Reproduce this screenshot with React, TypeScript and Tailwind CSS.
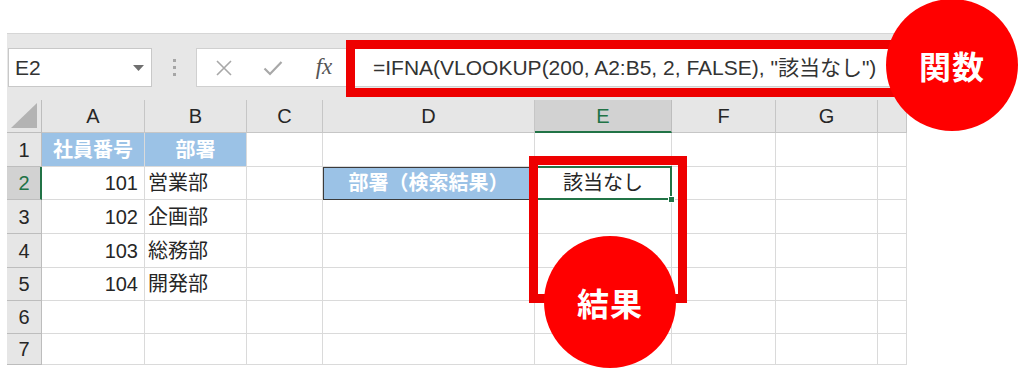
import React from "react";

const font = { fontFamily: '"Liberation Sans", "Noto Sans CJK JP", sans-serif' };

const cols = ["A", "B", "C", "D", "E", "F", "G", ""];
const rowHeights = ["h-[34px]", "h-[33px]", "h-[34px]", "h-[34px]", "h-[33px]", "h-[33px]", "h-[31px]"];

type CellDef = { text?: string; cls?: string };

function cellFor(r: number, c: number): CellDef {
  const data: Record<string, CellDef> = {
    "1-0": { text: "社員番号", cls: "bg-[#9bc2e6] text-white font-bold justify-center" },
    "1-1": { text: "部署", cls: "bg-[#9bc2e6] text-white font-bold justify-center" },
    "2-0": { text: "101", cls: "justify-end pr-[6px]" },
    "2-1": { text: "営業部", cls: "justify-start pl-[3px]" },
    "3-0": { text: "102", cls: "justify-end pr-[6px]" },
    "3-1": { text: "企画部", cls: "justify-start pl-[3px]" },
    "4-0": { text: "103", cls: "justify-end pr-[6px]" },
    "4-1": { text: "総務部", cls: "justify-start pl-[3px]" },
    "5-0": { text: "104", cls: "justify-end pr-[6px]" },
    "5-1": { text: "開発部", cls: "justify-start pl-[3px]" },
    "2-3": { text: "部署（検索結果）", cls: "bg-[#9bc2e6] text-white font-bold justify-center outline outline-1 outline-[#3b3b3b] -outline-offset-1" },
    "2-4": { text: "該当なし", cls: "justify-center relative" },
  };
  return data[`${r}-${c}`] ?? {};
}

export default function App() {
  return (
    <div className="w-[1024px] h-[374px] bg-white relative overflow-hidden text-[#262626]" style={font}>
      <div className="pt-[33px] pl-[7px]">
        <div className="w-[900px]">
          {/* toolbar */}
          <div className="h-[67px] bg-[#e7e7e7] border-t border-[#d6d6d6] flex items-start pt-[14px] pl-[1px]">
            <div className="w-[144px] h-[39px] bg-white border border-[#c8c8c8] flex items-center pl-[6px] pr-[7px]">
              <span className="text-[21px] text-[#333] flex-1">E2</span>
              <svg width="11" height="6" viewBox="0 0 11 6"><path d="M0 0 L11 0 L5.5 6 Z" fill="#6f6f6f" /></svg>
            </div>
            <div className="w-[44px] h-[39px] flex flex-col items-center justify-center gap-[4px]">
              <div className="w-[3px] h-[3px] bg-[#a6a6a6]" />
              <div className="w-[3px] h-[3px] bg-[#a6a6a6]" />
              <div className="w-[3px] h-[3px] bg-[#a6a6a6]" />
            </div>
            <div className="flex-1 h-[39px] bg-white border border-[#d0d0d0] flex items-center">
              <div className="w-[52px] flex justify-center pl-[2px]">
                <svg width="18" height="18" viewBox="0 0 18 18"><path d="M2 2 L16 16 M16 2 L2 16" stroke="#a8a8a8" strokeWidth="1.6" /></svg>
              </div>
              <div className="w-[48px] flex justify-center">
                <svg width="20" height="16" viewBox="0 0 20 16"><path d="M1.5 8.5 L7 14 L18.5 2" stroke="#a8a8a8" strokeWidth="2.2" fill="none" /></svg>
              </div>
              <div className="w-[54px] flex justify-center">
                <span className="text-[23px] italic text-[#555]" style={{ fontFamily: '"Liberation Serif", serif' }}>fx</span>
              </div>
              <div className="pl-[22px] text-[21px] text-[#333] whitespace-nowrap">
                =IFNA(VLOOKUP(200, A2:B5, 2, FALSE), "該当なし")
              </div>
            </div>
          </div>

          {/* grid */}
          <div className="grid grid-cols-[35px_103px_102px_76px_212px_137px_104px_102px_29px]">
            <div className="h-[33px] bg-[#e6e6e6] border-r border-b border-[#bdbdbd] relative">
              <svg className="absolute right-[4px] bottom-[4px]" width="26" height="25" viewBox="0 0 26 25"><path d="M26 0 L26 25 L0 25 Z" fill="#b3b3b3" /></svg>
            </div>
            {cols.map((c, i) => (
              <div
                key={`h${i}`}
                className={
                  i === 4
                    ? "h-[33px] bg-[#d2d2d2] border-r border-[#bdbdbd] border-b-2 border-b-[#217346] flex items-center justify-center text-[20px] text-[#217346]"
                    : "h-[33px] bg-[#e6e6e6] border-r border-b border-[#c6c6c6] flex items-center justify-center text-[20px] text-[#262626]"
                }
              >
                {c}
              </div>
            ))}
            {rowHeights.map((h, ri) => {
              const r = ri + 1;
              return (
                <React.Fragment key={`r${r}`}>
                  <div
                    className={
                      r === 2
                        ? `${h} bg-[#d2d2d2] border-r-2 border-r-[#217346] border-b border-[#bdbdbd] flex items-center justify-center text-[20px] text-[#217346] pl-[1px]`
                        : `${h} bg-[#e6e6e6] border-r border-b border-[#bdbdbd] flex items-center justify-center text-[20px] text-[#262626]`
                    }
                  >
                    {r}
                  </div>
                  {cols.map((_, ci) => {
                    const cd = cellFor(r, ci);
                    return (
                      <div
                        key={`c${r}-${ci}`}
                        className={`${h} border-r border-b border-[#dadada] flex items-center text-[20px] whitespace-nowrap ${cd.cls ?? ""}`}
                      >
                        {cd.text}
                        {r === 2 && ci === 4 && (
                          <>
                            <div className="absolute -left-[1px] -top-[1px] -right-[1px] -bottom-[1px] border-2 border-[#217346]" />
                            <div className="absolute -right-[4px] -bottom-[4px] w-[7px] h-[7px] bg-[#217346] border border-white" />
                          </>
                        )}
                      </div>
                    );
                  })}
                </React.Fragment>
              );
            })}
          </div>
        </div>
      </div>

      {/* red annotation frames */}
      <div className="absolute left-[346px] top-[40px] w-[560px] h-[57px] border-[9px] border-[#ee0000]" />
      <div className="absolute left-[529px] top-[156px] w-[158px] h-[147px] border-[9px] border-[#ee0000]" />

      {/* circles */}
      <div className="absolute left-[886px] top-[-1px] w-[132px] h-[132px] rounded-full bg-[#ff0000] flex items-center justify-center">
        <span className="text-white font-bold text-[32px] tracking-[1px]" style={{ fontFamily: '"Noto Sans CJK JP", sans-serif' }}>関数</span>
      </div>
      <div className="absolute left-[544px] top-[236px] w-[132px] h-[132px] rounded-full bg-[#ff0000] flex items-center justify-center">
        <span className="text-white font-bold text-[32px] tracking-[1px]" style={{ fontFamily: '"Noto Sans CJK JP", sans-serif' }}>結果</span>
      </div>
    </div>
  );
}
